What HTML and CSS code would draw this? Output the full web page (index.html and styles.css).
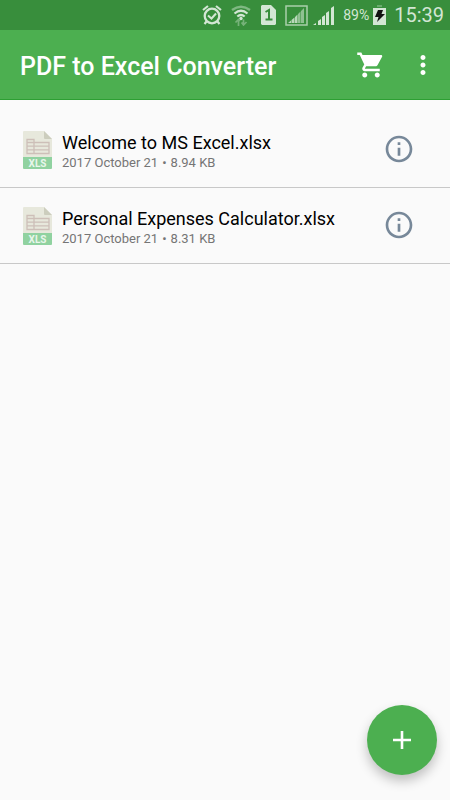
FILE: index.html
```html
<!DOCTYPE html>
<html lang="en">
<head>
<meta charset="utf-8">
<meta name="viewport" content="width=device-width, initial-scale=1">
<title>PDF to Excel Converter</title>
<link rel="stylesheet" href="styles.css">
</head>
<body>
<div class="screen">
  <div class="status">
    <svg class="alarm" width="20" height="22" viewBox="0 0 20 22" fill="none" stroke="#d3e6d4">
      <circle cx="10" cy="12" r="7.300" stroke-width="2.300"/>
      <path stroke-width="2.200" d="M1 6l5-4M19 6l-5-4M4.500 17.500L2.500 20M15.500 17.500l2 2.500"/>
      <path stroke-width="2" d="M6 11.500l3.500 3 4.500-5"/>
    </svg>
    <svg class="wifi" width="20" height="22" viewBox="0 0 20 22" fill="none">
      <path stroke="#7fb882" stroke-width="2.400" d="M1 6q9-6.500 18 0"/>
      <path stroke="#d3e6d4" stroke-width="2.200" d="M3.500 9.500q6.500-5.500 13 0M6.300 12.500q3.700-3 7.400 0"/>
      <circle cx="10" cy="14.500" r="1.700" fill="#d3e6d4"/>
      <path stroke="#76b279" stroke-width="1.700" d="M7.500 22v-6M4.500 18.500L7.500 15.500 9 17M12.500 15.500v6M10.500 18.500l2 2.500 3-3"/>
    </svg>
    <svg class="sim" width="15" height="20" viewBox="0 0 15 20">
      <path fill="#d3e6d4" d="M1 0h9l5 5v14l-1 1H1l-1-1V1z"/>
      <path fill="none" stroke="#388e3c" stroke-width="2" d="M4.500 7L8 5v9M4.500 14.500h7"/>
    </svg>
    <svg class="boxed" width="23" height="21" viewBox="0 0 23 21">
      <path fill="none" stroke="#a9cfab" stroke-width="1.500" d="M1 1h21v19H1z"/>
      <path fill="#b9d8ba" d="M3 18l3-2.500V18zM6.500 15l3-2.500V18h-3zM10 12l2.500-2.500V18H10z"/>
      <path fill="#8fc191" d="M13 9l2.500-2.500V18H13zM16 6l3-3v15h-3z"/>
    </svg>
    <svg class="signal" width="22" height="20" viewBox="0 0 22 20" fill="#d3e6d4">
      <path d="M0 20l3-2v2zM5 16l3-2v6H5zM9 12l3-2v10H9zM13 8l3-2v14h-3zM18 3l3-2v19h-3z"/>
    </svg>
    <span class="percent">89%</span>
    <svg class="battery" width="13" height="20" viewBox="0 0 13 20">
      <path fill="#6aab6d" d="M4 0h5v2H4z"/>
      <path fill="#d3e6d4" d="M0 3h13v17H0z"/>
      <path fill="#111" d="M5 5h5L8.500 9H12l-8 8 1.500-5H2z"/>
    </svg>
    <span class="clock">15:39</span>
  </div>
  <header class="bar">
    <h1>PDF to Excel Converter</h1>
    <button class="icon-button" aria-label="Shop">
      <svg width="30" height="30" viewBox="0 0 24 24" fill="#fff"><path d="M7 18c-1.100 0-1.990.9-1.990 2S5.900 22 7 22s2-.9 2-2-.9-2-2-2zM1 2v2h2l3.600 7.590-1.350 2.450c-.16.280-.25.610-.25.960 0 1.100.9 2 2 2h12v-2H7.420c-.14 0-.25-.11-.25-.25l.03-.12.900-1.630h7.450c.75 0 1.410-.41 1.750-1.030l3.580-6.490c.08-.14.120-.31.120-.48 0-.55-.45-1-1-1H5.210l-.94-2H1zm16 16c-1.100 0-1.990.9-1.990 2s.89 2 1.990 2 2-.9 2-2-.9-2-2-2z"/></svg>
    </button>
    <button class="icon-button" aria-label="More options">
      <svg width="30" height="30" viewBox="0 0 24 24" fill="#fff"><path d="M12 8c1.100 0 2-.9 2-2s-.9-2-2-2-2 .9-2 2 .9 2 2 2zm0 2c-1.100 0-2 .9-2 2s.9 2 2 2 2-.9 2-2-.9-2-2-2zm0 6c-1.100 0-2 .9-2 2s.9 2 2 2 2-.9 2-2-.9-2-2-2z"/></svg>
    </button>
  </header>
  <main>
    <ul class="files">
      <li class="file">
        <svg class="file-icon" width="30" height="38" viewBox="0 0 30 38">
          <path fill="#e7e8dc" d="M1 0h20l8 8v18H0V1q0-1 1-1z"/>
          <path fill="#cccdbd" d="M21 0l8 8h-7q-1 0-1-1z"/>
          <path fill="none" stroke="#cdbfb8" stroke-width="1.300" d="M4 8.500h7v3h15v11H4zM4 11.500h7M4 15.200h22M4 18.900h22M11 11v11.500"/>
          <path fill="#90d2a0" d="M0 26h29v11q0 1-1 1H1q-1 0-1-1z"/>
          <text x="14.500" y="35.500" text-anchor="middle" class="file-type">XLS</text>
        </svg>
        <div class="file-text">
          <h2>Welcome to MS Excel.xlsx</h2>
          <p><span>2017 October 21</span><span>•</span><span>8.94 KB</span></p>
        </div>
        <button class="info" aria-label="Details of Welcome to MS Excel.xlsx">
          <svg width="32" height="32" viewBox="0 0 24 24" fill="#778899"><path d="M11 7h2v2h-2zm0 4h2v6h-2zm1-9C6.480 2 2 6.480 2 12s4.480 10 10 10 10-4.480 10-10S17.520 2 12 2zm0 18c-4.410 0-8-3.590-8-8s3.590-8 8-8 8 3.590 8 8-3.590 8-8 8z"/></svg>
        </button>
      </li>
      <li class="file">
        <svg class="file-icon" width="30" height="38" viewBox="0 0 30 38">
          <path fill="#e7e8dc" d="M1 0h20l8 8v18H0V1q0-1 1-1z"/>
          <path fill="#cccdbd" d="M21 0l8 8h-7q-1 0-1-1z"/>
          <path fill="none" stroke="#cdbfb8" stroke-width="1.300" d="M4 8.500h7v3h15v11H4zM4 11.500h7M4 15.200h22M4 18.900h22M11 11v11.500"/>
          <path fill="#90d2a0" d="M0 26h29v11q0 1-1 1H1q-1 0-1-1z"/>
          <text x="14.500" y="35.500" text-anchor="middle" class="file-type">XLS</text>
        </svg>
        <div class="file-text">
          <h2>Personal Expenses Calculator.xlsx</h2>
          <p><span>2017 October 21</span><span>•</span><span>8.31 KB</span></p>
        </div>
        <button class="info" aria-label="Details of Personal Expenses Calculator.xlsx">
          <svg width="32" height="32" viewBox="0 0 24 24" fill="#778899"><path d="M11 7h2v2h-2zm0 4h2v6h-2zm1-9C6.480 2 2 6.480 2 12s4.480 10 10 10 10-4.480 10-10S17.520 2 12 2zm0 18c-4.410 0-8-3.590-8-8s3.590-8 8-8 8 3.590 8 8-3.590 8-8 8z"/></svg>
        </button>
      </li>
    </ul>
  </main>
  <button class="add" aria-label="Add file">
    <svg width="18" height="18" viewBox="0 0 18 18"><path fill="none" stroke="#fff" stroke-width="2.600" d="M9 0v18M0 9h18"/></svg>
  </button>
</div>
</body>
</html>
```

FILE: styles.css
```css
* {
  box-sizing: border-box;
}

body {
  margin: 0;
  background: #fafafa;
  color: #000;
  font-family: Roboto, "Liberation Sans", sans-serif;
}

h1, h2, p, ul {
  margin: 0;
  padding: 0;
}

button {
  display: flex;
  align-items: center;
  justify-content: center;
  padding: 0;
  border: 0;
  background: none;
}

svg {
  display: block;
  flex: none;
}

.screen {
  min-height: 100vh;
}

.status {
  display: flex;
  align-items: center;
  justify-content: flex-end;
  gap: 6px;
  height: 30px;
  padding-right: 6px;
  background: #388e3c;
  color: #d3e6d4;
}

.alarm,
.sim {
  margin-right: 3px;
}

.wifi {
  margin-right: 4px;
}

.boxed {
  margin-right: -1px;
}

.signal {
  margin-right: 2px;
}

.percent {
  font-size: 14px;
}

.battery {
  margin-left: -2px;
}

.clock {
  margin-left: 2px;
  font-size: 20px;
}

.bar {
  display: flex;
  align-items: center;
  height: 70px;
  padding: 0 12px 0 20px;
  border-bottom: 1px solid #2d9f33;
  background: #4caf50;
  color: #fff;
}

.bar h1 {
  flex: 1;
  padding-top: 4px;
  font-size: 25px;
  font-weight: 500;
  line-height: 30px;
}

.icon-button {
  width: 30px;
  height: 30px;
}

.icon-button + .icon-button {
  margin-left: 22px;
}

.files {
  padding-top: 12px;
  list-style: none;
}

.file {
  display: flex;
  align-items: center;
  height: 76px;
  padding: 0 35px 0 23px;
  border-bottom: 1px solid #c8c8c8;
}

.file-type {
  fill: #e8f6eb;
  font-size: 10px;
  font-weight: 700;
}

.file-text {
  flex: 1;
  min-width: 0;
  padding: 4px 0 0 9px;
}

.file-text h2 {
  font-size: 18px;
  font-weight: 400;
  line-height: 22px;
}

.file-text p {
  display: flex;
  gap: 4px;
  color: #757575;
  font-size: 13px;
  line-height: 18px;
}

.info {
  width: 32px;
  height: 34px;
  padding-bottom: 2px;
}

.add {
  position: fixed;
  right: 13px;
  bottom: 25px;
  width: 70px;
  height: 70px;
  border-radius: 50%;
  background: #4caf50;
  box-shadow: 0 6px 12px rgba(0, 0, 0, 0.24);
}
```
